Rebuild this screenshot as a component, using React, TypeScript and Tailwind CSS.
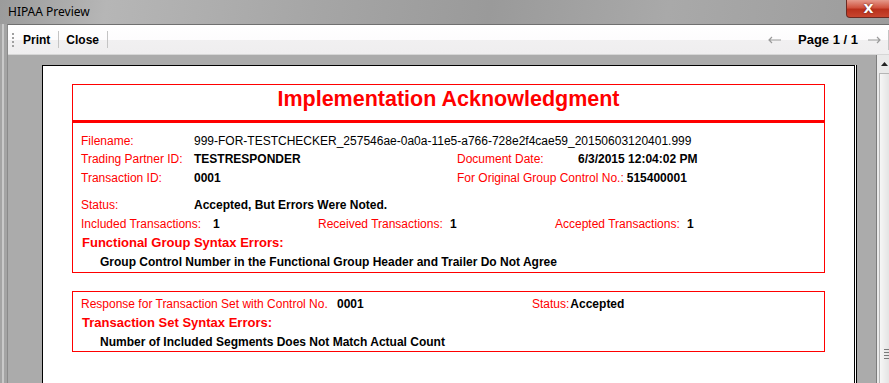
export default function App() {
  return (
    <div className="w-[889px] h-[383px] overflow-hidden flex flex-col bg-[#a9a9a9] font-['Liberation_Sans',Arial,sans-serif]">
      {/* window title bar */}
      <div className="h-[24px] shrink-0 flex items-start bg-[linear-gradient(100deg,#9b9b9b_0%,#b6b6b6_12%,#a6a6a6_35%,#9a9a9a_55%,#a9a9a9_75%,#9c9c9c_100%)]">
        <span className="ml-[8px] mt-[4px] text-[12px] leading-[16px] text-black font-['Noto_Sans',sans-serif]">HIPAA Preview</span>
        <div className="ml-auto mr-[-4px] w-[47px] h-[18px] rounded-b-[4px] border border-t-0 border-[#6b2a22] bg-[linear-gradient(180deg,#e59a8c_0%,#d0533f_45%,#b9301c_55%,#c8452f_100%)] flex items-center justify-center pr-[2px]">
          <span className="text-white text-[13px] leading-none font-bold font-['DejaVu_Sans',sans-serif] [text-shadow:0_0_2px_#5a1a10]">X</span>
        </div>
      </div>

      <div className="flex-1 flex min-h-0">
        {/* left window frame */}
        <div className="w-[7px] shrink-0 bg-[#a4a4a4] flex">
          <div className="ml-[2px] w-[2px] bg-[#c9c9c9]" />
        </div>

        <div className="flex-1 flex flex-col min-w-0 border-t border-[#707070] border-l border-l-[#8a8a8a]">
          {/* toolbar */}
          <div className="h-[30px] shrink-0 flex items-center bg-[linear-gradient(180deg,#ffffff_0%,#fdfcfd_50%,#f1f0f1_52%,#efeeef_100%)] border-b border-[#d6d6d6]">
            <div className="ml-[4px] h-[14px] border-l-2 border-dotted border-[#a0a0a0]" />
            <span className="ml-[9px] text-[12px] font-bold text-black">Print</span>
            <div className="ml-[8px] w-px h-[17px] bg-[#c4c4c4]" />
            <span className="ml-[7px] text-[12px] font-bold text-black">Close</span>
            <div className="ml-[8px] w-px h-[17px] bg-[#c4c4c4]" />
            <div className="ml-auto flex items-center">
              <svg width="15" height="8" viewBox="0 0 15 8" className="mr-[16px]">
                <path d="M14 4H2M5 1L2 4l3 3" stroke="#9a9a9a" strokeWidth="1.2" fill="none" />
              </svg>
              <span className="text-[13px] font-bold text-black">Page 1 / 1</span>
              <svg width="15" height="8" viewBox="0 0 15 8" className="ml-[9px]">
                <path d="M1 4h12M10 1l3 3-3 3" stroke="#9a9a9a" strokeWidth="1.2" fill="none" />
              </svg>
              <div className="ml-[6px] w-px h-[20px] bg-[#c4c4c4]" />
            </div>
          </div>

          {/* preview area */}
          <div className="flex-1 flex min-h-0">
            <div className="flex-1 bg-[#ababab] pt-[10px] pl-[34px] overflow-hidden">
              <div className="w-[813px] h-[400px] bg-white border border-black border-b-0 shadow-[1px_0_0_#ffffff,2px_0_0_#000000] pt-[18px] pl-[29px]">
                {/* acknowledgment box */}
                <div className="w-[753px] border border-[#ff0000] text-[12px]">
                  <div className="h-[35px] pt-[2px] text-center text-[21.5px] leading-[24px] font-bold text-[#ff0000]">
                    Implementation Acknowledgment
                  </div>
                  <div className="h-[3px] bg-[#ff0000]" />
                  <div className="pl-[8px] pt-[9px] pb-[1px]">
                    <div className="h-[18px] flex items-center">
                      <span className="w-[113px] text-[#ff0000]">Filename:</span>
                      <span className="text-black">999-FOR-TESTCHECKER_257546ae-0a0a-11e5-a766-728e2f4cae59_20150603120401.999</span>
                    </div>
                    <div className="h-[18px] flex items-center">
                      <span className="w-[113px] text-[#ff0000]">Trading Partner ID:</span>
                      <span className="w-[263px] font-bold text-black">TESTRESPONDER</span>
                      <span className="w-[121px] text-[#ff0000]">Document Date:</span>
                      <span className="font-bold text-black">6/3/2015 12:04:02 PM</span>
                    </div>
                    <div className="h-[19px] flex items-center">
                      <span className="w-[113px] text-[#ff0000]">Transaction ID:</span>
                      <span className="w-[263px] font-bold text-black">0001</span>
                      <span className="text-[#ff0000]">For Original Group Control No.:</span>
                      <span className="ml-[3px] font-bold text-black">515400001</span>
                    </div>
                    <div className="mt-[9px] h-[18px] flex items-center">
                      <span className="w-[113px] text-[#ff0000]">Status:</span>
                      <span className="font-bold text-black">Accepted, But Errors Were Noted.</span>
                    </div>
                    <div className="h-[19px] flex items-center">
                      {[
                        ['Included Transactions:', '1'],
                        ['Received Transactions:', '1'],
                        ['Accepted Transactions:', '1'],
                      ].map(([label, value]) => (
                        <div key={label} className="w-[237px] flex items-center">
                          <span className="w-[132px] text-[#ff0000]">{label}</span>
                          <span className="font-bold text-black">{value}</span>
                        </div>
                      ))}
                    </div>
                    <div className="h-[20px] flex items-center pl-[1px] text-[13px] font-bold text-[#ff0000]">
                      Functional Group Syntax Errors:
                    </div>
                    <div className="h-[18px] flex items-center pl-[19px] font-bold text-black">
                      Group Control Number in the Functional Group Header and Trailer Do Not Agree
                    </div>
                  </div>
                </div>

                {/* transaction set box */}
                <div className="mt-[18px] w-[753px] border border-[#ff0000] text-[12px] pl-[8px] pt-[2px]">
                  <div className="h-[19px] flex items-center">
                    <span className="w-[256px] text-[#ff0000]">Response for Transaction Set with Control No.</span>
                    <span className="w-[195px] font-bold text-black">0001</span>
                    <span className="text-[#ff0000]">Status:</span>
                    <span className="ml-[1px] font-bold text-black">Accepted</span>
                  </div>
                  <div className="h-[20px] flex items-center pl-[1px] text-[13px] font-bold text-[#ff0000]">
                    Transaction Set Syntax Errors:
                  </div>
                  <div className="h-[18px] flex items-center pl-[19px] font-bold text-black">
                    Number of Included Segments Does Not Match Actual Count
                  </div>
                </div>
              </div>
            </div>

            {/* vertical scrollbar */}
            <div className="w-[13px] shrink-0 flex flex-col border-l border-[#7d7d7d] bg-[#e9e9e9]">
              <div className="h-[18px] flex items-center justify-center pl-[3px]">
                <svg width="7" height="4" viewBox="0 0 7 4">
                  <path d="M0 4L3.5 0 7 4z" fill="#222" />
                </svg>
              </div>
              <div className="flex-1 ml-[2px] border-l border-t border-[#b5b5b5] bg-[linear-gradient(90deg,#f6f6f6,#e4e4e4)] flex flex-col justify-end items-center pb-[24px]">
                <div className="flex flex-col gap-[2px] pl-[4px]">
                  <div className="w-[6px] h-px bg-[#7a7a7a]" />
                  <div className="w-[6px] h-px bg-[#7a7a7a]" />
                  <div className="w-[6px] h-px bg-[#7a7a7a]" />
                  <div className="w-[6px] h-px bg-[#7a7a7a]" />
                </div>
              </div>
            </div>
          </div>
        </div>
      </div>
    </div>
  );
}
